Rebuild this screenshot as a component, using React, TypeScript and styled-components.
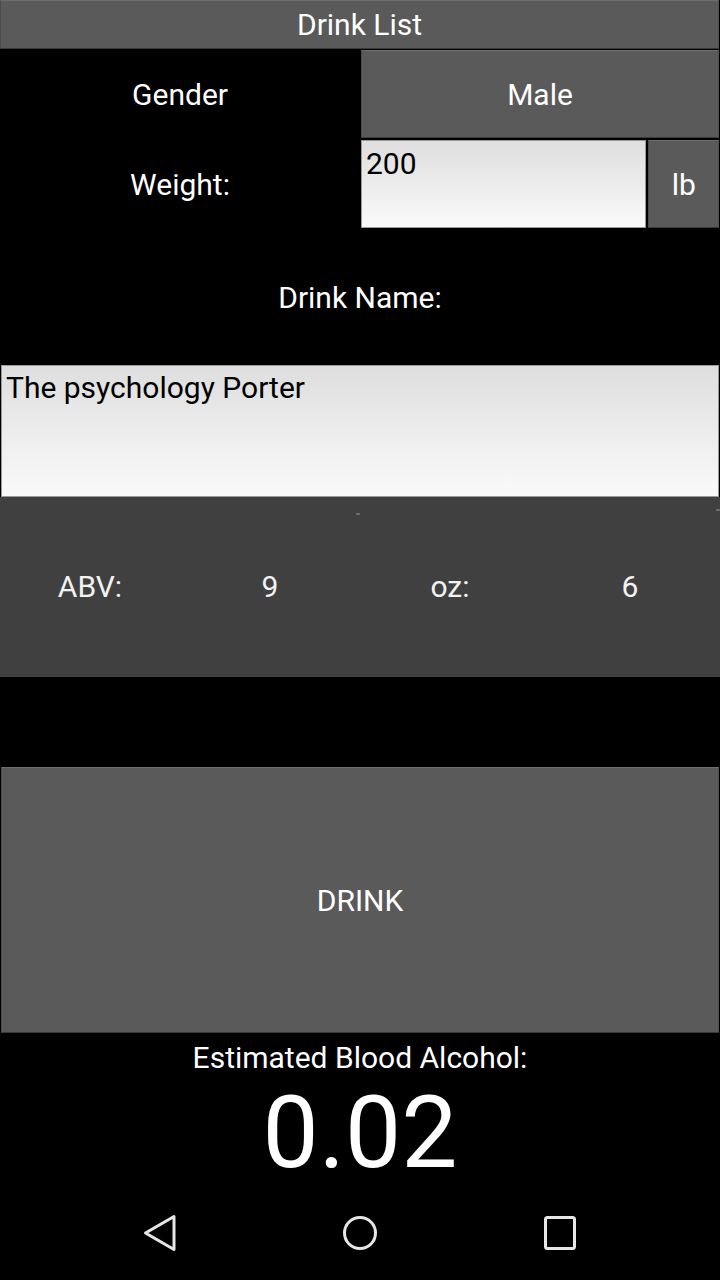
import React from "react";
import styled, { createGlobalStyle } from "styled-components";

const Global = createGlobalStyle`
  html, body { margin: 0; padding: 0; background: #000; }
  body { font-family: Roboto, "Noto Sans", sans-serif; }
`;

const Page = styled.div`
  width: 720px;
  height: 1280px;
  background: #000;
  display: flex;
  flex-direction: column;
  overflow: hidden;
`;

const GrayButton = styled.div<{ $h: number; $size?: number }>`
  box-sizing: border-box;
  height: ${(p) => p.$h}px;
  background: #5a5a5a;
  border-top: 1px solid #6e6e6e;
  border-left: 1px solid #4a4a4a;
  border-right: 1px solid #505050;
  border-bottom: 1px solid #3a3a3a;
  color: #fff;
  font-size: ${(p) => p.$size ?? 30}px;
  display: flex;
  align-items: center;
  justify-content: center;
`;

const TitleButton = styled(GrayButton)`
  margin: 0 1px 0 0;
`;

const Row = styled.div<{ $h: number }>`
  height: ${(p) => p.$h}px;
  display: grid;
  grid-template-columns: 360px 360px;
`;

const Label = styled.div`
  color: #fff;
  font-size: 30px;
  display: flex;
  align-items: center;
  justify-content: center;
`;

const RightCell = styled.div<{ $pt: number; $pb: number }>`
  display: flex;
  gap: 2px;
  padding: ${(p) => p.$pt}px 1px ${(p) => p.$pb}px 1px;
`;

const FlexButton = styled(GrayButton)`
  flex: 1;
  height: auto;
`;

const UnitButton = styled(GrayButton)`
  width: 71px;
  height: auto;
`;

const Field = styled.div<{ $h?: number }>`
  box-sizing: border-box;
  background: linear-gradient(#dedede, #fafafa);
  border: 1px solid #9a9a9a;
  color: #000;
  font-size: 30px;
  line-height: 1;
  padding: 7px 5px 0 4px;
  ${(p) => (p.$h ? `height: ${p.$h}px;` : "")}
`;

const WeightField = styled(Field)`
  width: 287px;
  padding-top: 8px;
`;

const NameLabel = styled(Label)`
  height: 136px;
`;

const NameField = styled(Field)`
  margin: 0 1px;
  padding-top: 7px;
  padding-left: 4px;
`;

const Panel = styled.div`
  height: 180px;
  background: #404040;
  display: grid;
  grid-template-columns: repeat(4, 180px);
  position: relative;
`;

const PanelText = styled.div`
  color: #f2f2f2;
  font-size: 30px;
  display: flex;
  align-items: center;
  justify-content: center;
  padding-bottom: 2px;
`;

const Tick = styled.div<{ $x: number; $y: number; $w: number }>`
  position: absolute;
  left: ${(p) => p.$x}px;
  top: ${(p) => p.$y}px;
  width: ${(p) => p.$w}px;
  height: 2px;
  background: #6a6a6a;
`;

const Spacer = styled.div<{ $h: number }>`
  height: ${(p) => p.$h}px;
`;

const DrinkButton = styled(GrayButton)`
  margin: 0 1px;
`;

const ResultBlock = styled.div`
  display: flex;
  flex-direction: column;
  align-items: center;
  color: #fff;
  height: 152px;
`;

const ResultLabel = styled.div`
  font-size: 30px;
  margin-top: 8px;
  line-height: 34px;
`;

const ResultValue = styled.div`
  font-size: 100px;
  line-height: 100px;
  margin-top: 8px;
`;

const NavBar = styled.div`
  flex: 1;
  display: grid;
  grid-template-columns: repeat(3, 1fr);
  align-items: center;
  justify-items: center;
  padding-left: 60px;
  padding-right: 60px;
`;

export default function App() {
  return (
    <Page>
      <Global />
      <TitleButton $h={49}>Drink List</TitleButton>
      <Row $h={90}>
        <Label>Gender</Label>
        <RightCell $pt={1} $pb={1}>
          <FlexButton $h={0}>Male</FlexButton>
        </RightCell>
      </Row>
      <Row $h={90}>
        <Label>Weight:</Label>
        <RightCell $pt={1} $pb={1}>
          <WeightField>200</WeightField>
          <UnitButton $h={0}>lb</UnitButton>
        </RightCell>
      </Row>
      <NameLabel>Drink Name:</NameLabel>
      <NameField $h={132}>The psychology Porter</NameField>
      <Panel>
        <PanelText>ABV:</PanelText>
        <PanelText>9</PanelText>
        <PanelText>oz:</PanelText>
        <PanelText>6</PanelText>
        <Tick $x={356} $y={16} $w={4} />
        <Tick $x={716} $y={12} $w={4} />
      </Panel>
      <Spacer $h={90} />
      <DrinkButton $h={266}>DRINK</DrinkButton>
      <ResultBlock>
        <ResultLabel>Estimated Blood Alcohol:</ResultLabel>
        <ResultValue>0.02</ResultValue>
      </ResultBlock>
      <NavBar>
        <svg width="40" height="40" viewBox="0 0 40 40">
          <path d="M34 3.5 L5.5 20 L34 36.5 Z" fill="none" stroke="#e6e6e6" strokeWidth="3" strokeLinejoin="round" />
        </svg>
        <svg width="40" height="40" viewBox="0 0 40 40">
          <circle cx="20" cy="20" r="15.5" fill="none" stroke="#e6e6e6" strokeWidth="3" />
        </svg>
        <svg width="40" height="40" viewBox="0 0 40 40">
          <rect x="5.5" y="4.5" width="29" height="31" rx="2" fill="none" stroke="#e6e6e6" strokeWidth="3" />
        </svg>
      </NavBar>
    </Page>
  );
}
